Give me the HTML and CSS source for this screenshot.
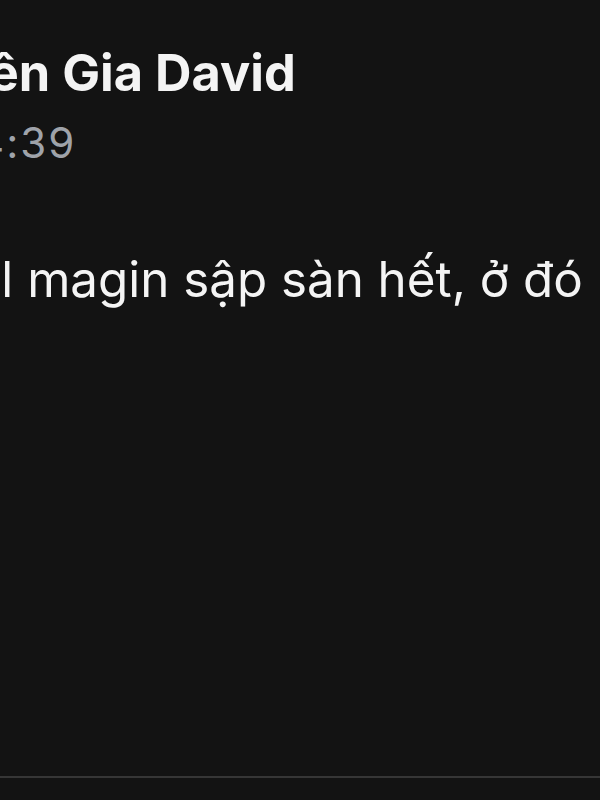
FILE: index.html
```html
<!DOCTYPE html>
<html lang="vi">
<head>
<meta charset="utf-8">
<link rel="stylesheet" href="styles.css">
</head>
<body>
<div class="screen">
  <div class="thread">
    <div class="header">
      <div class="name"><span class="cut-name">Chuy</span>ên Gia David</div>
      <div class="time"><span class="cut-time">14</span>:39</div>
    </div>
    <div class="message"><span class="cut-msg">ful</span>l magin sập sàn hết, ở đó</div>
  </div>
  <div class="composer"></div>
</div>
</body>
</html>
```
FILE: styles.css
```css
html, body {
  margin: 0;
  padding: 0;
  background: #131313;
}
.screen {
  width: 600px;
  height: 800px;
  overflow: hidden;
  display: flex;
  flex-direction: column;
  font-family: Inter, "Noto Sans", sans-serif;
  color: #f4f4f4;
}
.thread {
  flex: 1;
  padding-top: 41px;
  white-space: nowrap;
}
.header {
  display: flex;
  flex-direction: column;
}
.name {
  font-size: 50.5px;
  font-weight: 700;
  line-height: 64px;
}
.cut-name { margin-left: -141px; }
.time {
  margin-top: 13px;
  font-size: 42px;
  color: #9fa3aa;
  line-height: 50px;
  letter-spacing: 2px;
}
.cut-time { margin-left: -42px; }
.message {
  margin-top: 81px;
  font-size: 49.3px;
  line-height: 60px;
}
.cut-msg { margin-left: -58px; }
.composer {
  height: 22px;
  border-top: 2px solid #363636;
}
```
